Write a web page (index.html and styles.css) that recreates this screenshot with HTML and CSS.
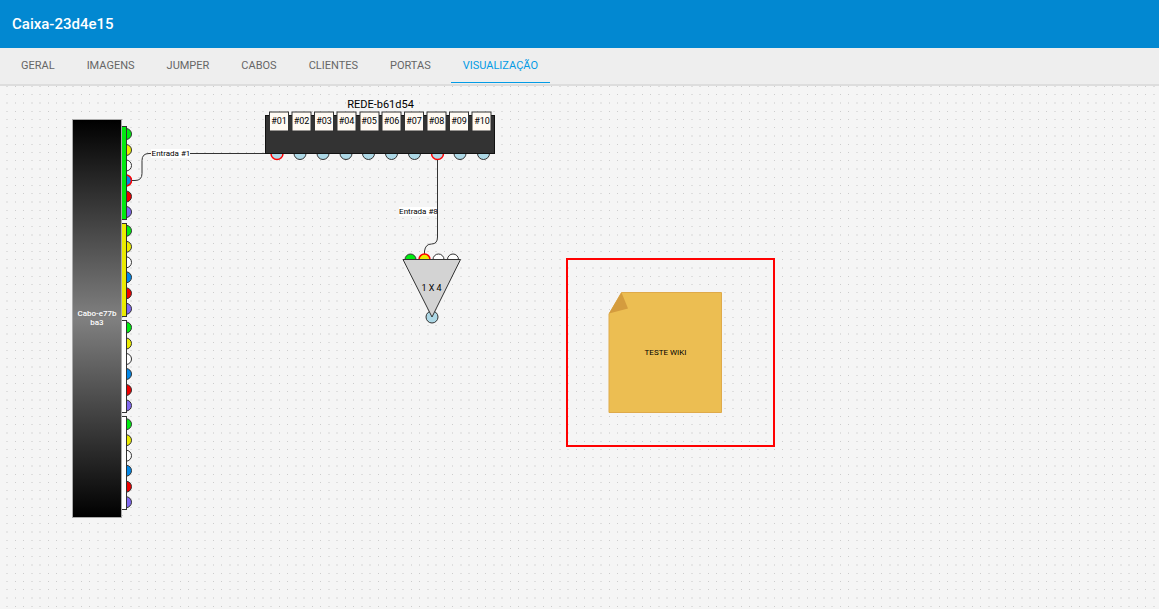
FILE: index.html
```html
<!DOCTYPE html>
<html lang="pt-BR">
<head>
<meta charset="utf-8">
<title>Caixa-23d4e15</title>
<link rel="stylesheet" href="styles.css">
</head>
<body>
<header class="topbar"><h1 class="title">Caixa-23d4e15</h1></header>
<nav class="tabs">
  <a class="tab" href="#geral">GERAL</a>
  <a class="tab" href="#imagens">IMAGENS</a>
  <a class="tab" href="#jumper">JUMPER</a>
  <a class="tab" href="#cabos">CABOS</a>
  <a class="tab" href="#clientes">CLIENTES</a>
  <a class="tab" href="#portas">PORTAS</a>
  <a class="tab active" href="#visualizacao" aria-current="page">VISUALIZAÇÃO</a>
</nav>
<main class="canvas">
<svg class="diagram" aria-label="Diagrama">
  <defs>
    <pattern id="dots" width="33" height="33" patternUnits="userSpaceOnUse">
      <path class="dot-strong" d="M15 0h1v1h-1zM15 8h1v1h-1zM15 25h1v1h-1zM23 0h1v1h-1zM23 8h1v1h-1zM23 25h1v1h-1z"/>
      <path class="dot-soft" d="M6 0h2v1h-2zM6 8h2v1h-2zM6 25h2v1h-2zM31 0h2v1h-2zM31 8h2v1h-2zM31 25h2v1h-2zM15 16h1v2h-1zM23 16h1v2h-1z"/>
      <path class="dot-faint" d="M6 16h2v2h-2zM31 16h2v2h-2z"/>
    </pattern>
    <linearGradient id="cable" x1="0" y1="0" x2="0" y2="1">
      <stop offset="0" stop-color="#000"/>
      <stop offset="0.5" stop-color="#808080"/>
      <stop offset="1" stop-color="#000"/>
    </linearGradient>
    <g id="fibers">
      <circle class="green" cx="126" cy="48" r="5.5"/>
      <circle class="yellow" cx="126" cy="64" r="5.5"/>
      <circle class="white" cx="126" cy="79.5" r="5.5"/>
      <circle class="blue" cx="126" cy="94.5" r="5.5"/>
      <circle class="red" cx="126" cy="110.5" r="5.5"/>
      <circle class="purple" cx="126" cy="126" r="5.5"/>
    </g>
  </defs>
  <rect width="100%" height="100%" fill="url(#dots)"/>

  <g class="part">
    <use href="#fibers"/>
    <use href="#fibers" y="96.8"/>
    <use href="#fibers" y="193.5"/>
    <use href="#fibers" y="290.2"/>
    <circle class="blue used" cx="126" cy="94.5" r="5.5"/>
    <rect class="green" x="121.5" y="40.5" width="5" height="93"/>
    <rect class="yellow" x="121.5" y="137.5" width="5" height="93"/>
    <rect class="white" x="121.5" y="234.5" width="5" height="92"/>
    <rect class="white" x="121.5" y="330.5" width="5" height="93"/>
    <rect class="cable" x="72.5" y="33.5" width="49" height="398" fill="url(#cable)"/>
  </g>
  <text class="small light" x="97" y="230">Cabo-e77b</text>
  <text class="small light" x="97" y="239">ba3</text>

  <path class="link" d="M132 94.5h3q7 0 7-7v-13q0-7 7-7h117"/>
  <rect class="label" x="151" y="63" width="39" height="9"/>
  <text class="small" x="171" y="70">Entrada #1</text>

  <g class="part">
    <g class="port">
      <circle class="used" cx="277" cy="67.5" r="6"/><circle cx="300" cy="67.5" r="6"/>
      <circle cx="323" cy="67.5" r="6"/><circle cx="346" cy="67.5" r="6"/>
      <circle cx="368.5" cy="67.5" r="6"/><circle cx="391.5" cy="67.5" r="6"/>
      <circle cx="414.5" cy="67.5" r="6"/><circle class="used" cx="437.5" cy="67.5" r="6"/>
      <circle cx="460" cy="67.5" r="6"/><circle cx="483.5" cy="67.5" r="6"/>
    </g>
    <rect class="dark" x="265.5" y="29.5" width="229" height="38"/>
    <g class="tag">
      <rect x="269.5" y="26" width="19" height="19"/><rect x="292" y="26" width="19" height="19"/>
      <rect x="314.5" y="26" width="19" height="19"/><rect x="337" y="26" width="19" height="19"/>
      <rect x="360" y="26" width="19" height="19"/><rect x="382" y="26" width="19" height="19"/>
      <rect x="404.5" y="26" width="19" height="19"/><rect x="427" y="26" width="19" height="19"/>
      <rect x="449.5" y="26" width="19" height="19"/><rect x="472" y="26" width="19" height="19"/>
    </g>
  </g>
  <g class="number">
    <text x="279" y="38">#01</text><text x="301.5" y="38">#02</text><text x="324" y="38">#03</text>
    <text x="346.5" y="38">#04</text><text x="369" y="38">#05</text><text x="391.5" y="38">#06</text>
    <text x="414" y="38">#07</text><text x="436.5" y="38">#08</text><text x="459" y="38">#09</text>
    <text x="482" y="38">#10</text>
  </g>
  <text class="name" x="380.5" y="22">REDE-b61d54</text>

  <rect class="label" x="399" y="121" width="38" height="9"/>
  <path class="link" d="M437.5 74v77q0 7-6 7t-7 7v3"/>
  <text class="small" x="418.5" y="128">Entrada #8</text>

  <g class="part">
    <circle class="green" cx="410.5" cy="173.5" r="5.5"/>
    <circle class="white" cx="438.5" cy="173.5" r="5.5"/>
    <circle class="white" cx="453" cy="173.5" r="5.5"/>
    <circle class="yellow used" cx="424.5" cy="173.5" r="5.5"/>
    <circle class="water" cx="432" cy="231" r="6"/>
    <path class="splitter" d="M403 173.5h57.5L432 231z"/>
  </g>
  <text class="number" x="431.5" y="205">1 X 4</text>

  <path class="note" d="M621.5 206.5h100v120H609v-98.5z"/>
  <path class="fold" d="M621.5 206.5l6.5 16-19 5z"/>
  <text class="small" x="665.5" y="269">TESTE WIKI</text>
  <rect class="highlight" x="567" y="173" width="207" height="187"/>
</svg>
</main>
</body>
</html>
```
FILE: styles.css
```css
* { box-sizing: border-box; }
body {
  margin: 0;
  min-height: 100vh;
  display: flex;
  flex-direction: column;
  background: #f5f5f5;
  font-family: Roboto, sans-serif;
}
.topbar {
  display: flex;
  align-items: center;
  height: 48px;
  padding: 0 12px;
  background: #0288d1;
  color: #fff;
}
.title { margin: 0; font-size: 15px; font-weight: 500; }
.tabs {
  display: flex;
  gap: 8px;
  height: 38px;
  padding: 0 9px;
  background: #eee;
  border-bottom: 2px solid #ddd;
}
.tab {
  height: 35px;
  padding: 0 12px;
  border-bottom: 1px solid transparent;
  color: #666;
  font-size: 11px;
  line-height: 36px;
  text-decoration: none;
}
.tab.active { color: #039be5; border-color: #039be5; }
.canvas { flex: 1; display: flex; }
.diagram { flex: 1; min-height: 440px; display: block; }
.dot-strong { fill: #ccc; }
.dot-soft { fill: #dedede; }
.dot-faint { fill: #e6e6e6; }
.part { stroke: #333; stroke-width: 1; }
.part .cable { stroke: #aaa; }
.green { fill: #00ec10; }
.yellow { fill: #ecec00; }
.white { fill: #fff; }
.blue { fill: #0288e8; }
.red { fill: #f00000; }
.purple { fill: #8068f0; }
.water, .port { fill: #add8e6; }
.dark { fill: #333; stroke: #111; }
.tag { fill: #fffaf3; }
.splitter { fill: #d3d3d3; }
.used { stroke: #f00; stroke-width: 1.5; }
.link { fill: none; stroke: #333; }
.label { fill: #fff; }
.note { fill: #ecbe52; stroke: #dfaa4a; }
.fold { fill: #d49c3e; }
.highlight { fill: none; stroke: #f00; stroke-width: 2; }
text { text-anchor: middle; fill: #000; }
.small { font-size: 8px; }
.light { fill: #fff; font-weight: 500; }
.number { font-size: 9px; }
.name { font-size: 11px; }
```
